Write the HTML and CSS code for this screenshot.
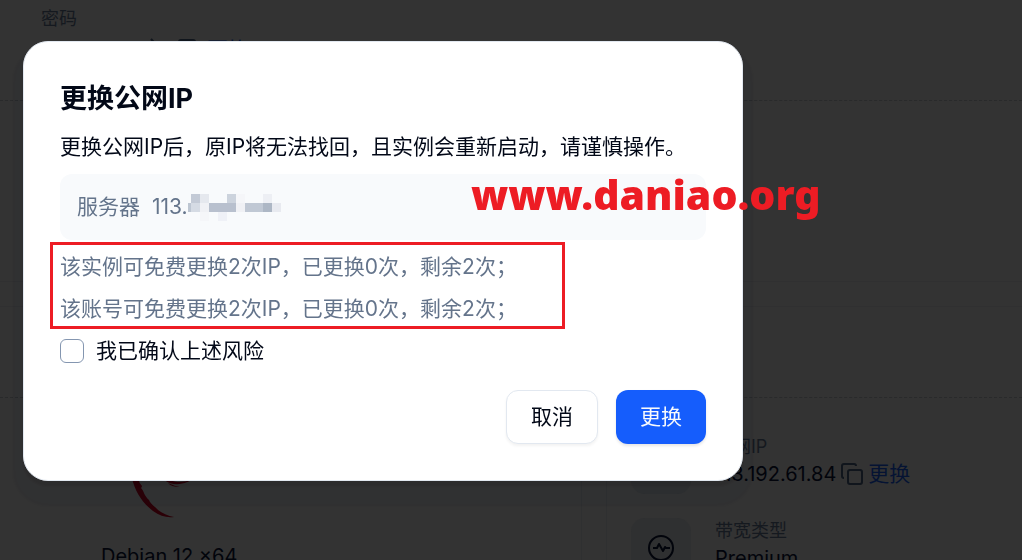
FILE: index.html
```html
<!DOCTYPE html>
<html lang="zh-CN">
<head>
<meta charset="utf-8">
<title>更换公网IP</title>
<link rel="stylesheet" href="styles.css">
</head>
<body>
<main class="page">
  <section class="credentials">
    <div class="label">密码</div>
    <div class="secret">
      <svg class="icon" viewBox="0 0 24 24"><path d="M4 1l18 20M2 12s4-6 10-6 10 6 10 6-4 7-10 7S2 12 2 12z"/><circle cx="12" cy="12" r="3"/></svg>
      <svg class="icon" viewBox="0 0 24 24"><rect x="8" y="8" width="14" height="14" rx="2"/><path d="M4 16a2 2 0 0 1-2-2V4a2 2 0 0 1 2-2h12a2 2 0 0 1 2 2"/></svg>
      <a class="link" href="#">更换</a>
    </div>
  </section>
  <section class="usage"><div class="gutter"></div></section>
  <section class="instance">
    <div class="system">
      <svg class="debian" viewBox="0 0 90 110" aria-hidden="true">
        <path d="M56 5C26 2 0 24 1 53C2 61 4 68 6 74C10 87 17 96 26 103C33 108 40 110 47 109C41 108 35 105 31 102C28 98 24 97 22 92C17 88 17 83 14 80C17 77 12 77 12 72C7 54 12 27 36 17C49 12 66 18 74 31C69 15 65 8 56 5z"/>
        <path d="M64 72C57 77 45 78 37 72C27 64 29 44 43 36C34 48 33 60 39 69C44 75 55 75 64 72z"/>
        <path d="M41 75Q47 78 53 79Q44 79 41 75z"/>
      </svg>
      <div class="name">Debian 12 x64</div>
    </div>
    <div class="divider"></div>
    <div class="specs">
      <div class="spec">
        <div class="tile"></div>
        <div>
          <div class="label">公网IP</div>
          <div class="value">113.192.61.84
            <svg class="icon" viewBox="0 0 24 24"><rect x="8" y="8" width="14" height="14" rx="2"/><path d="M4 16a2 2 0 0 1-2-2V4a2 2 0 0 1 2-2h10a2 2 0 0 1 2 2"/></svg>
            <a class="link" href="#">更换</a>
          </div>
        </div>
      </div>
      <div class="spec">
        <div class="tile"><svg class="pulse" viewBox="0 0 26 26"><circle cx="13" cy="13" r="12"/><path d="M5 13h4l2-4 4 7 2-4 1 1h4"/></svg></div>
        <div>
          <div class="label">带宽类型</div>
          <div class="value">Premium</div>
        </div>
      </div>
    </div>
  </section>
</main>
<div class="overlay">
  <form class="dialog" role="dialog" aria-labelledby="title">
    <h2 class="title" id="title">更换公网IP</h2>
    <p class="line">更换公网IP后，原IP将无法找回，且实例会重新启动，请谨慎操作。</p>
    <div class="server">
      <span>服务器</span>
      <span class="address">113.<svg class="mosaic" viewBox="0 0 93 27" aria-hidden="true">
        <path fill="#c3cad6" d="M3 0h9v9H3z"/><path fill="#e5e8ee" d="M12 0h9v9h-9z"/><path fill="#ccd3dd" d="M39 0h9v9h-9z"/><path fill="#edeff4" d="M75 0h9v9h-9z"/>
        <path fill="#bdc6d2" d="M0 9h3v9H0z"/><path fill="#d5dbe4" d="M3 9h9v9H3z"/><path fill="#f0f1f5" d="M12 9h9v9h-9zM48 9h9v9h-9z"/><path fill="#b8c0ce" d="M21 9h27v9H21z"/><path fill="#c0c8d4" d="M57 9h18v9H57z"/><path fill="#adb7c5" d="M75 9h9v9h-9z"/><path fill="#e8eaf0" d="M84 9h9v9h-9z"/>
        <path fill="#eff1f7" d="M30 18h9v9h-9z"/><path fill="#f5f6f9" d="M12 18h9v9h-9zM48 0h9v9h-9z"/>
      </svg></span>
    </div>
    <div class="quota">
      <p class="line">该实例可免费更换2次IP，已更换0次，剩余2次；</p>
      <p class="line">该账号可免费更换2次IP，已更换0次，剩余2次；</p>
    </div>
    <label class="confirm" for="agree"><input class="check" type="checkbox" id="agree">我已确认上述风险</label>
    <div class="actions">
      <button class="button" type="button">取消</button>
      <button class="button primary" type="submit">更换</button>
    </div>
    <div class="watermark">www.daniao.org</div>
  </form>
</div>
</body>
</html>
```
FILE: styles.css
```css
* { box-sizing: border-box; }

body {
  margin: 0;
  height: 100vh;
  overflow: hidden;
  background: #333;
  color: #02040b;
  font-family: Inter, "Noto Sans CJK SC", sans-serif;
  font-size: 21px;
  line-height: 28px;
}

p, h2 { margin: 0; }
a { text-decoration: none; }

.label { color: #15191f; font-size: 18px; line-height: 26px; }
.link { color: #051333; font-size: 21px; }
.icon { width: 24px; height: 24px; fill: none; stroke: #10151c; stroke-width: 2; }

.credentials {
  height: 101px;
  padding: 6px 41px;
  border-bottom: 1px dashed #292a2b;
}
.secret { display: flex; align-items: center; gap: 6px; padding: 4px 0 0 106px; }
.usage { height: 297px; padding-top: 180px; border-bottom: 1px dashed #292a2b; }
.gutter { height: 26px; border: solid #303031; border-width: 1px 0; }

.instance { display: flex; align-items: flex-start; }
.system { width: 581px; padding: 10px 0 0 101px; }
.debian { display: block; width: 90px; height: 110px; margin-left: 26px; fill: #2b0007; }
.name { padding-top: 24px; font-size: 20px; }
.divider {
  width: 26px;
  height: 162px;
  border: solid #2f3031;
  border-width: 0 1px;
}
.specs { display: grid; gap: 24px; padding: 36px 0 0 24px; }
.spec { display: flex; gap: 24px; }
.tile {
  display: flex;
  align-items: center;
  justify-content: center;
  width: 60px;
  height: 60px;
  border-radius: 14px;
  background: #2f3031;
}
.value { display: flex; align-items: center; gap: 4px; font-size: 20px; }
.pulse { width: 26px; height: 26px; fill: none; stroke: #02040b; stroke-width: 2; stroke-linejoin: round; }

.overlay {
  position: fixed;
  inset: 0;
  padding: 41px 279px 0 23px;
}
.dialog {
  position: relative;
  padding: 36px;
  border: 1px solid #e2e8f0;
  border-radius: 25px;
  background: #fff;
  box-shadow: 0 5px 2px #00000014, 0 15px 2px 10px #0010200f;
  color: #020817;
}
.title { margin-bottom: 6px; font-size: 27px; line-height: 42px; font-weight: 700; }
.line { line-height: 42px; white-space: nowrap; }
.server {
  display: flex;
  align-items: center;
  gap: 12px;
  height: 66px;
  margin: 6px 0;
  padding: 0 17px;
  border-radius: 12px;
  background: #f8fafc;
  color: #64748b;
}
.address { display: flex; align-items: center; }
.mosaic { width: 93px; height: 27px; }
.quota { position: relative; color: #64748b; }
.quota::after {
  content: "";
  position: absolute;
  inset: -4px 141px 1px -10px;
  border: 3px solid #ed1c24;
}
.confirm { display: flex; align-items: center; gap: 12px; line-height: 42px; }
.check {
  appearance: none;
  width: 24px;
  height: 24px;
  margin: 0;
  border: 1px solid #8496b0;
  border-radius: 6px;
}
.actions { display: flex; justify-content: flex-end; gap: 18px; padding-top: 18px; }
.button {
  height: 54px;
  padding: 0 24px;
  border: 1px solid #e2e8f0;
  border-radius: 12px;
  background: #fff;
  box-shadow: 0 2px 3px #0000000d;
  color: inherit;
  font: inherit;
}
.primary { border: 0; background: #155dfc; box-shadow: 0 2px 3px #0000001a; color: #f8fafc; }
.watermark {
  position: absolute;
  top: 125px;
  left: 447px;
  color: #ed1c24;
  font: 900 41px/54px "Noto Sans", sans-serif;
}
```
